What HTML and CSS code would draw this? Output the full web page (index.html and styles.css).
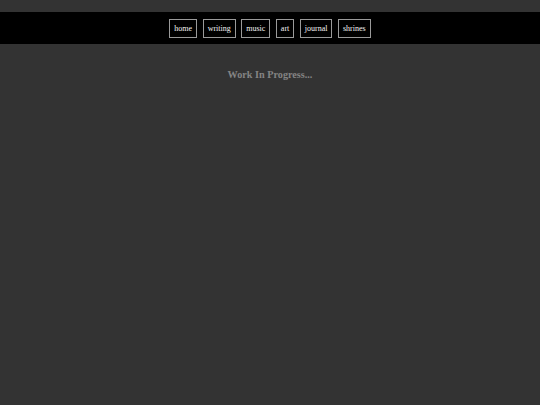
FILE: index.html
```html
<!DOCTYPE html>
<html>
<head>
<meta charset="utf-8">
<link rel="stylesheet" href="styles.css">
</head>
<body>
<nav class="navbar">
  <a class="nav-link" href="#">home</a>
  <a class="nav-link" href="#">writing</a>
  <a class="nav-link" href="#">music</a>
  <a class="nav-link" href="#">art</a>
  <a class="nav-link" href="#">journal</a>
  <a class="nav-link" href="#">shrines</a>
</nav>
<main class="content">
  <h1 class="title">Work In Progress...</h1>
</main>
</body>
</html>
```
FILE: styles.css
```css
html, body {
  margin: 0;
  padding: 0;
  background: #333333;
  font-family: "Liberation Serif", "Times New Roman", serif;
}
body {
  padding-top: 12px;
}
.navbar {
  background: #000;
  display: flex;
  justify-content: center;
  align-items: center;
  gap: 5.5px;
  height: 32px;
}
.nav-link {
  color: #f4f4f4;
  text-decoration: none;
  font-size: 8px;
  line-height: 11px;
  padding: 3px 4px;
  border: 1px solid #9a9a9a;
}
.content {
  text-align: center;
  padding-top: 24px;
}
.title {
  margin: 0;
  font-size: 10.2px;
  font-weight: bold;
  color: #848484;
  line-height: 14px;
}
```
